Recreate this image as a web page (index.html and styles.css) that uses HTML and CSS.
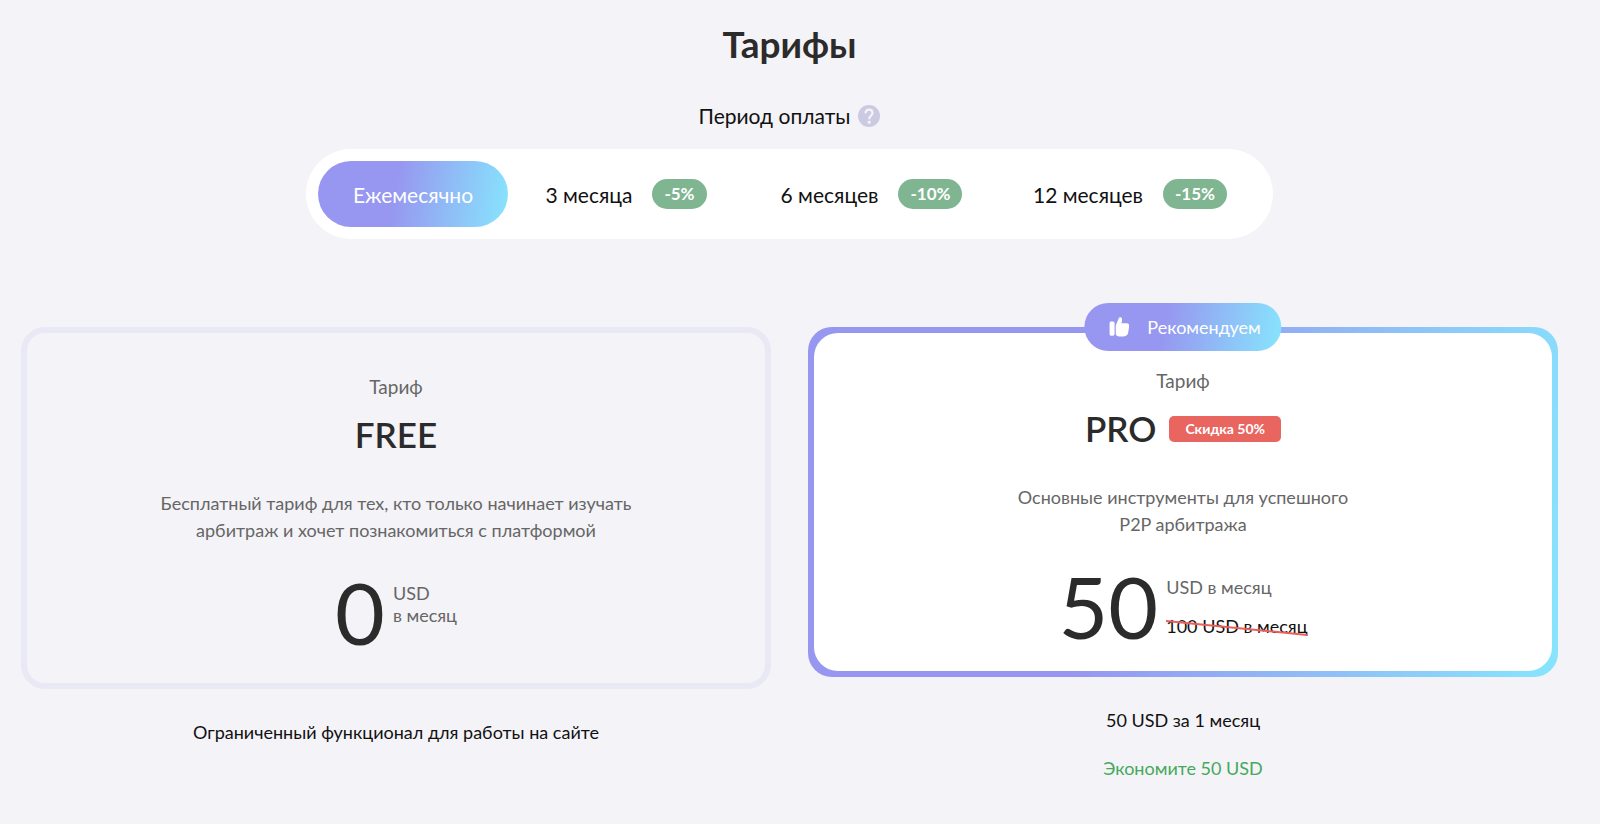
FILE: index.html
```html
<!DOCTYPE html>
<html lang="ru">
<head>
<meta charset="utf-8">
<meta name="viewport" content="width=device-width, initial-scale=1">
<title>Тарифы</title>
<link rel="stylesheet" href="styles.css">
</head>
<body>
<main class="pricing">
  <h1 class="title">Тарифы</h1>
  <div class="period-label">
    <span id="period">Период оплаты</span>
    <button class="help" type="button" aria-label="Подсказка">
      <svg viewBox="0 0 22 22" width="22" height="22" aria-hidden="true">
        <circle cx="11" cy="11" r="11" fill="#cccae3"/>
        <path d="M7.6 8.2C7.6 5.9 9 4.6 11 4.6S14.5 5.9 14.5 7.9C14.5 10.3 11.2 10.8 11.2 14.2" fill="none" stroke="#f4f3f8" stroke-width="2.2"/>
        <circle cx="11.2" cy="17.2" r="1.6" fill="#f4f3f8"/>
      </svg>
    </button>
  </div>
  <div class="periods" role="group" aria-labelledby="period">
    <button class="period period-active" type="button">Ежемесячно</button>
    <button class="period" type="button">3 месяца <span class="off">-5%</span></button>
    <button class="period" type="button">6 месяцев <span class="off">-10%</span></button>
    <button class="period" type="button">12 месяцев <span class="off">-15%</span></button>
  </div>
  <div class="plans">
    <section class="plan">
      <div class="card card-free">
        <p class="kind">Тариф</p>
        <h2 class="name">FREE</h2>
        <p class="about">Бесплатный тариф для тех, кто только начинает изучать арбитраж и хочет познакомиться с платформой</p>
        <div class="price">
          <span class="amount">0</span>
          <div class="unit"><span>USD</span><span>в месяц</span></div>
        </div>
      </div>
      <p class="note">Ограниченный функционал для работы на сайте</p>
    </section>
    <section class="plan">
      <div class="card card-pro">
        <div class="ribbon">
          <svg viewBox="0 0 20 20" width="20" height="20" fill="#fff" aria-hidden="true">
            <rect x="0" y="4.5" width="5.2" height="14.2" rx="1.6"/>
            <path d="M6.4 8.4 9.3 1.4C9.8-.1 12.5-.1 12.7 2.3C12.8 3.8 12.4 5 12 6.2H17.7Q20.2 6.4 19.9 8.9L18.7 16.3Q18.2 18.9 15.6 19.2C12.8 19.8 9.9 19.8 7.8 18.9Q6.4 18.2 6.4 16.8Z"/>
          </svg>
          <span>Рекомендуем</span>
        </div>
        <p class="kind">Тариф</p>
        <div class="heading">
          <h2 class="name">PRO</h2>
          <span class="sale">Скидка 50%</span>
        </div>
        <p class="about about-narrow">Основные инструменты для успешного P2P арбитража</p>
        <div class="price">
          <span class="amount">50</span>
          <div class="unit">
            <span>USD в месяц</span>
            <s class="old">100 USD в месяц
              <svg class="strike" viewBox="0 0 146 16" preserveAspectRatio="none" aria-hidden="true"><path d="M0 1 146 15" stroke="#eb5e59" stroke-width="2"/></svg>
            </s>
          </div>
        </div>
      </div>
      <p class="note">50 USD за 1 месяц</p>
      <p class="note note-save">Экономите 50 USD</p>
    </section>
  </div>
</main>
</body>
</html>
```
FILE: styles.css
```css
* { box-sizing: border-box; }

body {
  margin: 0;
  background: #f4f3f8;
  color: #111;
  font-family: Lato, "Liberation Sans", sans-serif;
  font-size: 18px;
  line-height: 27px;
}

h1, h2, p { margin: 0; }

button {
  border: 0;
  padding: 0;
  background: none;
  color: inherit;
  font: inherit;
  cursor: pointer;
}

.pricing {
  display: flex;
  flex-direction: column;
  align-items: center;
  padding: 22px 42px 24px 21px;
}

.title {
  color: #2b2b2b;
  font-size: 37px;
  font-weight: 700;
  line-height: 44px;
}

.period-label {
  display: flex;
  align-items: center;
  gap: 8px;
  margin-top: 36px;
  font-size: 21px;
}

.help { display: flex; }

.periods {
  display: grid;
  grid-template-columns: 190fr 236fr 255fr 262fr;
  width: 100%;
  max-width: 967px;
  margin-top: 20px;
  padding: 12px;
  border-radius: 45px;
  background: #fff;
}

.period {
  display: flex;
  align-items: center;
  justify-content: center;
  gap: 20px;
  height: 66px;
  border-radius: 33px;
  font-size: 21px;
  white-space: nowrap;
}

.period-active,
.ribbon {
  background: linear-gradient(100deg, #9796f0 0%, #9796f0 40%, #87e5fd 100%);
  color: #fff;
}

.off {
  padding: 0 12px;
  border-radius: 15px;
  background: #7fb591;
  color: #fff;
  font-size: 17px;
  font-weight: 700;
  line-height: 30px;
}

.plans {
  display: grid;
  grid-template-columns: 1fr 1fr;
  gap: 37px;
  width: 100%;
  margin-top: 88px;
}

.plan { text-align: center; }

.card {
  display: flex;
  flex-direction: column;
  align-items: center;
  border: 6px solid #e9e8f5;
  border-radius: 24px;
  padding: 40px 24px 29px;
}

.card-pro {
  position: relative;
  border: 0;
  padding: 40px 30px 29px;
  background: linear-gradient(100deg, #9796f0 0%, #9796f0 40%, #87e5fd 100%);
  isolation: isolate;
}

.card-pro::before {
  content: "";
  position: absolute;
  inset: 6px;
  z-index: -1;
  border-radius: 24px;
  background: #fff;
}

.ribbon {
  position: absolute;
  top: 0;
  left: 50%;
  display: flex;
  align-items: center;
  gap: 18px;
  height: 48px;
  padding: 0 21px 0 25px;
  border-radius: 24px;
  transform: translate(-50%, -50%);
}

.kind {
  color: #666;
  font-size: 19px;
}

.name {
  color: #2b2b2b;
  font-size: 35px;
  font-weight: 600;
  line-height: 44px;
  margin-top: 12px;
}

.heading {
  display: flex;
  align-items: center;
  gap: 13px;
}

.sale {
  margin-top: 14px;
  padding: 0 16px;
  border-radius: 5px;
  background: #e96560;
  color: #fff;
  font-size: 14px;
  font-weight: 700;
  line-height: 26px;
}

.about {
  max-width: 500px;
  margin-top: 34px;
  color: #666;
}

.about-narrow { max-width: 350px; }

.price {
  display: flex;
  align-items: flex-start;
  gap: 8px;
  margin-top: 26px;
}

.amount {
  color: #2b2b2b;
  font-size: 86px;
  line-height: 84px;
}

.unit {
  display: flex;
  flex-direction: column;
  align-items: flex-start;
  padding-top: 12px;
  color: #666;
  line-height: 22px;
}

.old {
  position: relative;
  margin-top: 17px;
  color: #111;
  text-decoration: none;
}

.strike {
  position: absolute;
  top: 5px;
  left: 0;
  width: 100%;
  height: 16px;
}

.note { margin-top: 30px; }

.note + .note { margin-top: 21px; }

.note-save { color: #45a95b; }
```
